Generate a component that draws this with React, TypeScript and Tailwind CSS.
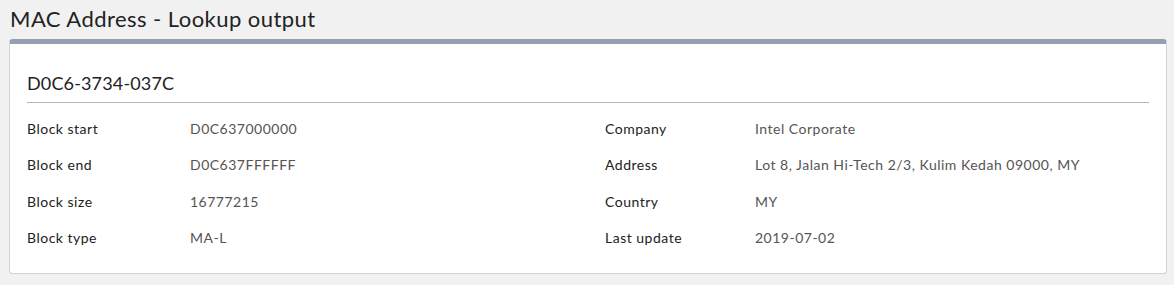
import type { ReactNode } from "react";

const LEFT = [
	["Block start", "D0C637000000"],
	["Block end", "D0C637FFFFFF"],
	["Block size", "16777215"],
	["Block type", "MA-L"],
];

const RIGHT = [
	["Company", "Intel Corporate"],
	["Address", "Lot 8, Jalan Hi-Tech 2/3, Kulim Kedah 09000, MY"],
	["Country", "MY"],
	["Last update", "2019-07-02"],
];

function Rows({ rows, labelWidth }: { rows: string[][]; labelWidth: string }): ReactNode {
	return (
		<div className="flex flex-col">
			{rows.map(([label, value]) => (
				<div className="flex h-[36.5px] items-center text-[14px] tracking-[0.5px]" key={label}>
					<div className={`${labelWidth} text-[#222]`}>{label}</div>
					<div className="text-[#555]">{value}</div>
				</div>
			))}
		</div>
	);
}

export default function App(): ReactNode {
	return (
		<div className="min-h-[285px] bg-[#f1f1f1] px-[9px] pt-[5px] font-['Lato',sans-serif]">
			<h1 className="pl-px text-[22px] leading-[28px] tracking-[0.45px] text-[#222]">
				MAC Address - Lookup output
			</h1>
			<div className="mt-[6px] w-[1158px] rounded-[4px] border border-t-[5px] border-[#cdd3da] border-t-[#94a0b0] bg-white px-[17px] pt-[26px] pb-[17px]">
				<h2 className="border-b border-[#a9b8c8] pb-[6px] text-[18px] leading-[26px] tracking-[0.15px] text-[#222]">
					D0C6-3734-037C
				</h2>
				<div className="mt-[7px] flex">
					<div className="w-[578px]">
						<Rows rows={LEFT} labelWidth="w-[163px]" />
					</div>
					<Rows rows={RIGHT} labelWidth="w-[150px]" />
				</div>
			</div>
		</div>
	);
}
